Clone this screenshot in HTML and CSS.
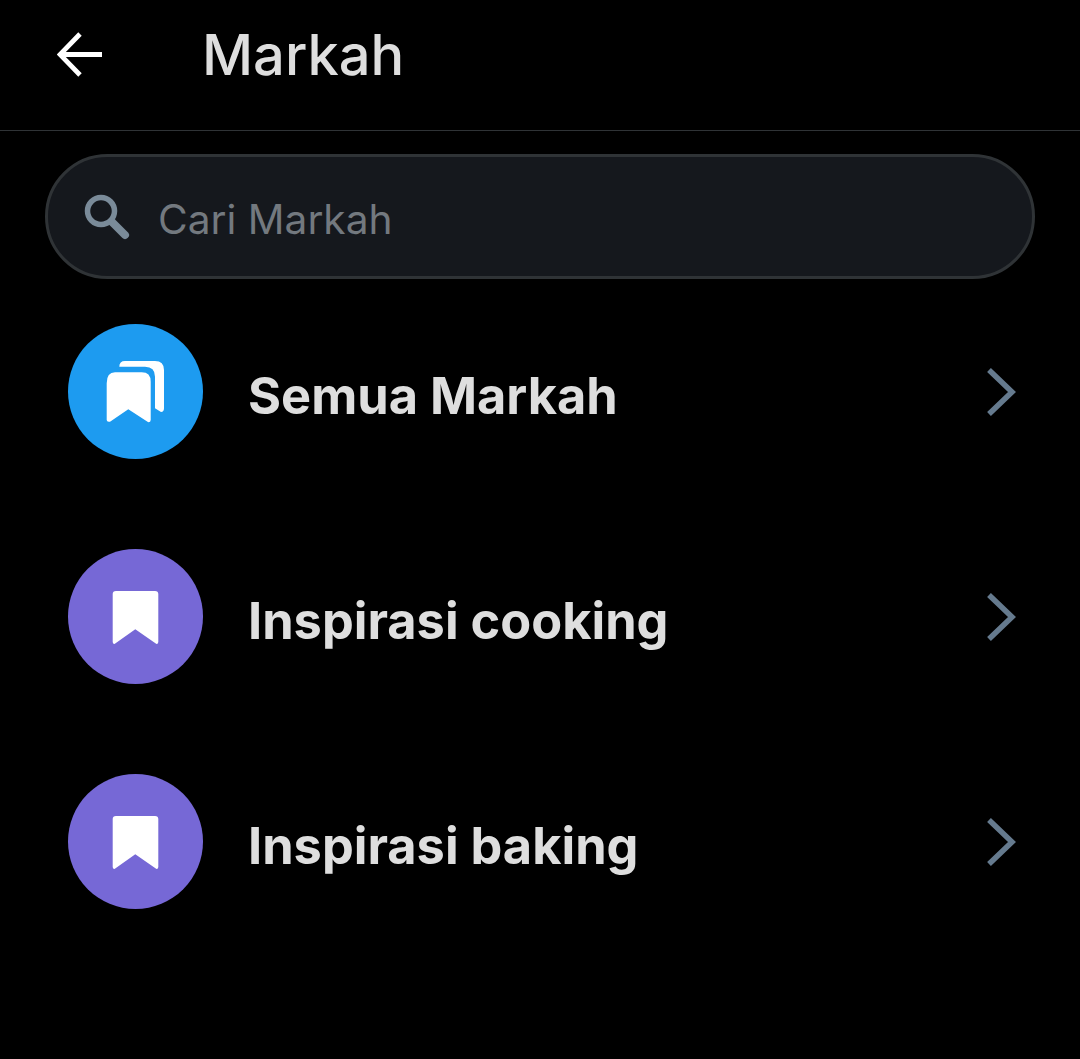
FILE: index.html
```html
<!doctype html>
<html lang="id">
<head>
    <meta charset="utf-8">
    <meta name="viewport" content="width=device-width, initial-scale=1">
    <link rel="stylesheet" href="styles.css">
    <title>Markah</title>
</head>
<body>
    <header class="topbar">
        <svg class="back" viewBox="0 0 46 46" width="46" height="46" aria-hidden="true">
            <path d="M45 22.500H4M23 2 3 22.500 23 43" fill="none" stroke="#fff" stroke-width="4.800"/>
        </svg>
        <h1 class="title">Markah</h1>
    </header>

    <div class="search">
        <svg class="search-icon" viewBox="0 0 46 46" width="46" height="46" aria-hidden="true">
            <circle cx="17" cy="17" r="13.500" fill="none" stroke="#7a8b99" stroke-width="5.500"/>
            <path d="M28 28 41 41" fill="none" stroke="#7a8b99" stroke-width="8" stroke-linecap="round"/>
        </svg>
        <span class="placeholder">Cari Markah</span>
    </div>

    <ul class="folders">
        <li class="folder">
            <span class="badge badge-all">
                <svg viewBox="0 0 135 135" width="135" height="135" aria-hidden="true">
                    <path fill="#fff" d="M51.300 42.700H77Q87 42.700 87 52.700V84.300L93 88Q96 88 96 84.300V46Q96 37 87 37H57Q51.300 37 51.300 42.700Z"/>
                    <path fill="#fff" d="M38.700 59.300Q38.700 48.300 47 48.300H73.700Q82.700 48.300 82.700 57.700V96Q82.700 98.300 80.300 98.300L60.300 85.300 42 97.700Q38.700 98.300 38.700 96Z"/>
                </svg>
            </span>
            <span class="name">Semua Markah</span>
            <svg class="chevron" viewBox="0 0 30 50" width="30" height="50" aria-hidden="true">
                <path d="M3 3 26 25 3 47" fill="none" stroke="#657a8e" stroke-width="5.500"/>
            </svg>
        </li>
        <li class="folder">
            <span class="badge badge-list">
                <svg viewBox="0 0 135 135" width="135" height="135" aria-hidden="true">
                    <path fill="#fff" d="M44.700 45Q44.700 42 48 42H87Q90.300 42 90.300 45V93Q90.300 95 88.500 95L67.300 80.300 46.500 95Q44.700 95 44.700 93Z"/>
                </svg>
            </span>
            <span class="name">Inspirasi cooking</span>
            <svg class="chevron" viewBox="0 0 30 50" width="30" height="50" aria-hidden="true">
                <path d="M3 3 26 25 3 47" fill="none" stroke="#657a8e" stroke-width="5.500"/>
            </svg>
        </li>
        <li class="folder">
            <span class="badge badge-list">
                <svg viewBox="0 0 135 135" width="135" height="135" aria-hidden="true">
                    <path fill="#fff" d="M44.700 45Q44.700 42 48 42H87Q90.300 42 90.300 45V93Q90.300 95 88.500 95L67.300 80.300 46.500 95Q44.700 95 44.700 93Z"/>
                </svg>
            </span>
            <span class="name">Inspirasi baking</span>
            <svg class="chevron" viewBox="0 0 30 50" width="30" height="50" aria-hidden="true">
                <path d="M3 3 26 25 3 47" fill="none" stroke="#657a8e" stroke-width="5.500"/>
            </svg>
        </li>
    </ul>
</body>
</html>
```

FILE: styles.css
```css
html, body {
    height: 100%;
}
body {
    margin: 0;
    padding: 0;
    background: #000;
    color: #dedede;
    font-family: "Inter", "Liberation Sans", sans-serif;
    overflow: hidden;
}
.topbar {
    display: flex;
    align-items: center;
    height: 131px;
    padding: 0 0 21px 57px;
    box-sizing: border-box;
    border-bottom: 1px solid #2f3336;
}
.back {
    flex: none;
}
.title {
    margin: 0 0 0 99px;
    font-size: 56px;
    font-weight: 500;
    line-height: 60px;
}
.search {
    display: flex;
    align-items: center;
    height: 125px;
    margin: 23px 45px 0;
    padding: 0 0 0 36px;
    box-sizing: border-box;
    background: #15181d;
    border: 3px solid #2f3336;
    border-radius: 63px;
}
.search-icon {
    flex: none;
}
.placeholder {
    margin: 5px 0 0 28px;
    font-size: 40.700px;
    color: #73797f;
}
.folders {
    margin: 45px 0 0;
    padding: 0;
    list-style: none;
    display: flex;
    flex-direction: column;
    gap: 90px;
}
.folder {
    display: flex;
    align-items: center;
    height: 135px;
    padding: 0 64px 0 68px;
}
.badge {
    flex: none;
    width: 135px;
    height: 135px;
    border-radius: 50%;
    display: block;
}
.badge svg {
    display: block;
}
.badge-all {
    background: #1d9bf0;
}
.badge-list {
    background: #7668d6;
}
.name {
    flex: 1;
    margin: 7px 0 0 45px;
    font-size: 50.500px;
    font-weight: 700;
    color: #dedede;
}
.chevron {
    flex: none;
}
```
